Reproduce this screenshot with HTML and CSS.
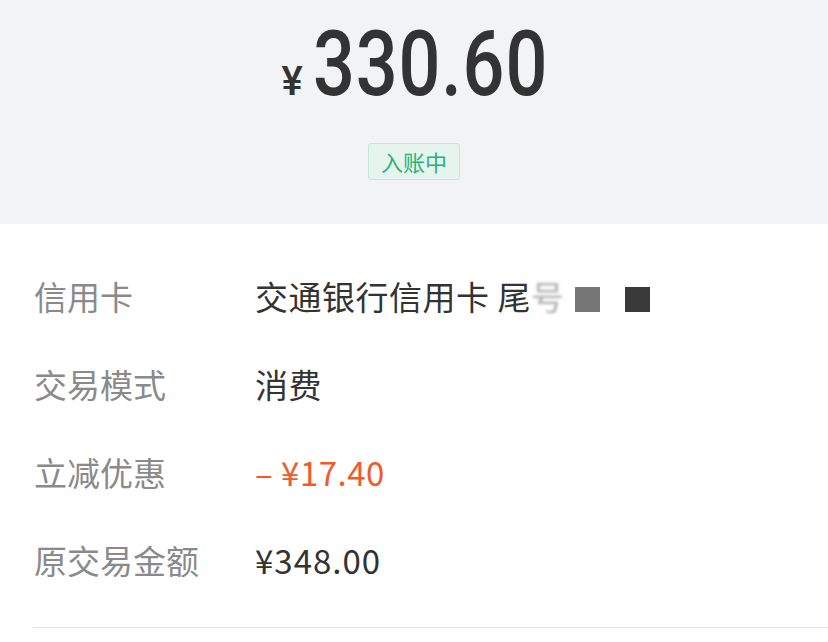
FILE: index.html
```html
<!DOCTYPE html>
<html>
<head>
    <meta charset="utf-8">
    <title>交易详情</title>
    <link rel="stylesheet" href="styles.css">
</head>
<body>
    <div class="summary">
        <div class="amount">
            <span class="currency">¥</span><span class="amount-value">330.60</span>
        </div>
        <div class="status-badge">入账中</div>
    </div>

    <div class="detail-list">
        <div class="detail-row">
            <div class="detail-label">信用卡</div>
            <div class="detail-value">
                <span>交通银行信用卡&nbsp;尾</span><span class="masked-char">号</span>
                <span class="mask mask-light"></span>
                <span class="mask mask-dark"></span>
            </div>
        </div>
        <div class="detail-row">
            <div class="detail-label">交易模式</div>
            <div class="detail-value">消费</div>
        </div>
        <div class="detail-row">
            <div class="detail-label">立减优惠</div>
            <div class="detail-value discount">–&nbsp;¥17.40</div>
        </div>
        <div class="detail-row">
            <div class="detail-label">原交易金额</div>
            <div class="detail-value num">¥348.00</div>
        </div>
    </div>
</body>
</html>
```

FILE: styles.css
```css
body {
    margin: 0;
    background: #fff;
    font-family: "Noto Sans CJK SC", "Noto Sans", sans-serif;
    color: #333;
}

.summary {
    background: #f2f3f5;
    padding: 16px 0 44px;
    display: flex;
    flex-direction: column;
    align-items: center;
}

.amount {
    height: 100px;
    display: flex;
    align-items: baseline;
    justify-content: center;
    color: #333;
    font-family: Roboto, "Liberation Sans", sans-serif;
    line-height: 98px;
}

.currency {
    font-size: 40px;
    font-weight: 500;
    margin-right: 10px;
}

.amount-value {
    display: inline-block;
    font-size: 90px;
    font-weight: 500;
    letter-spacing: 1px;
    transform: scaleX(0.82);
    transform-origin: left center;
    width: 234px;
}

.status-badge {
    margin-top: 27px;
    padding: 0 12px;
    height: 35px;
    line-height: 35px;
    font-size: 22px;
    color: #27b277;
    background: #e5f5ee;
    border: 1px solid #c3e8d8;
    border-radius: 3px;
}

.detail-list {
    margin: 0 0 0 33px;
    padding: 28px 0 23px;
    border-bottom: 1px solid #e3e3e3;
}

.detail-row {
    display: flex;
    align-items: center;
    height: 88px;
    font-size: 33px;
}

.detail-label {
    width: 221px;
    flex-shrink: 0;
    color: #8a8a8a;
    padding-left: 1px;
}

.detail-value {
    display: flex;
    align-items: center;
    color: #333;
    letter-spacing: 0.5px;
}

.discount {
    color: #f15a2b;
}

.num {
    letter-spacing: 1px;
}

.masked-char {
    color: #888;
    filter: blur(1.5px);
    opacity: 0.7;
}

.mask {
    display: inline-block;
    width: 25px;
    height: 25px;
    margin-top: 6px;
}

.mask-light {
    background: #777;
    margin-left: 11px;
}

.mask-dark {
    background: #3a3a3a;
    margin-left: 25px;
}
```
